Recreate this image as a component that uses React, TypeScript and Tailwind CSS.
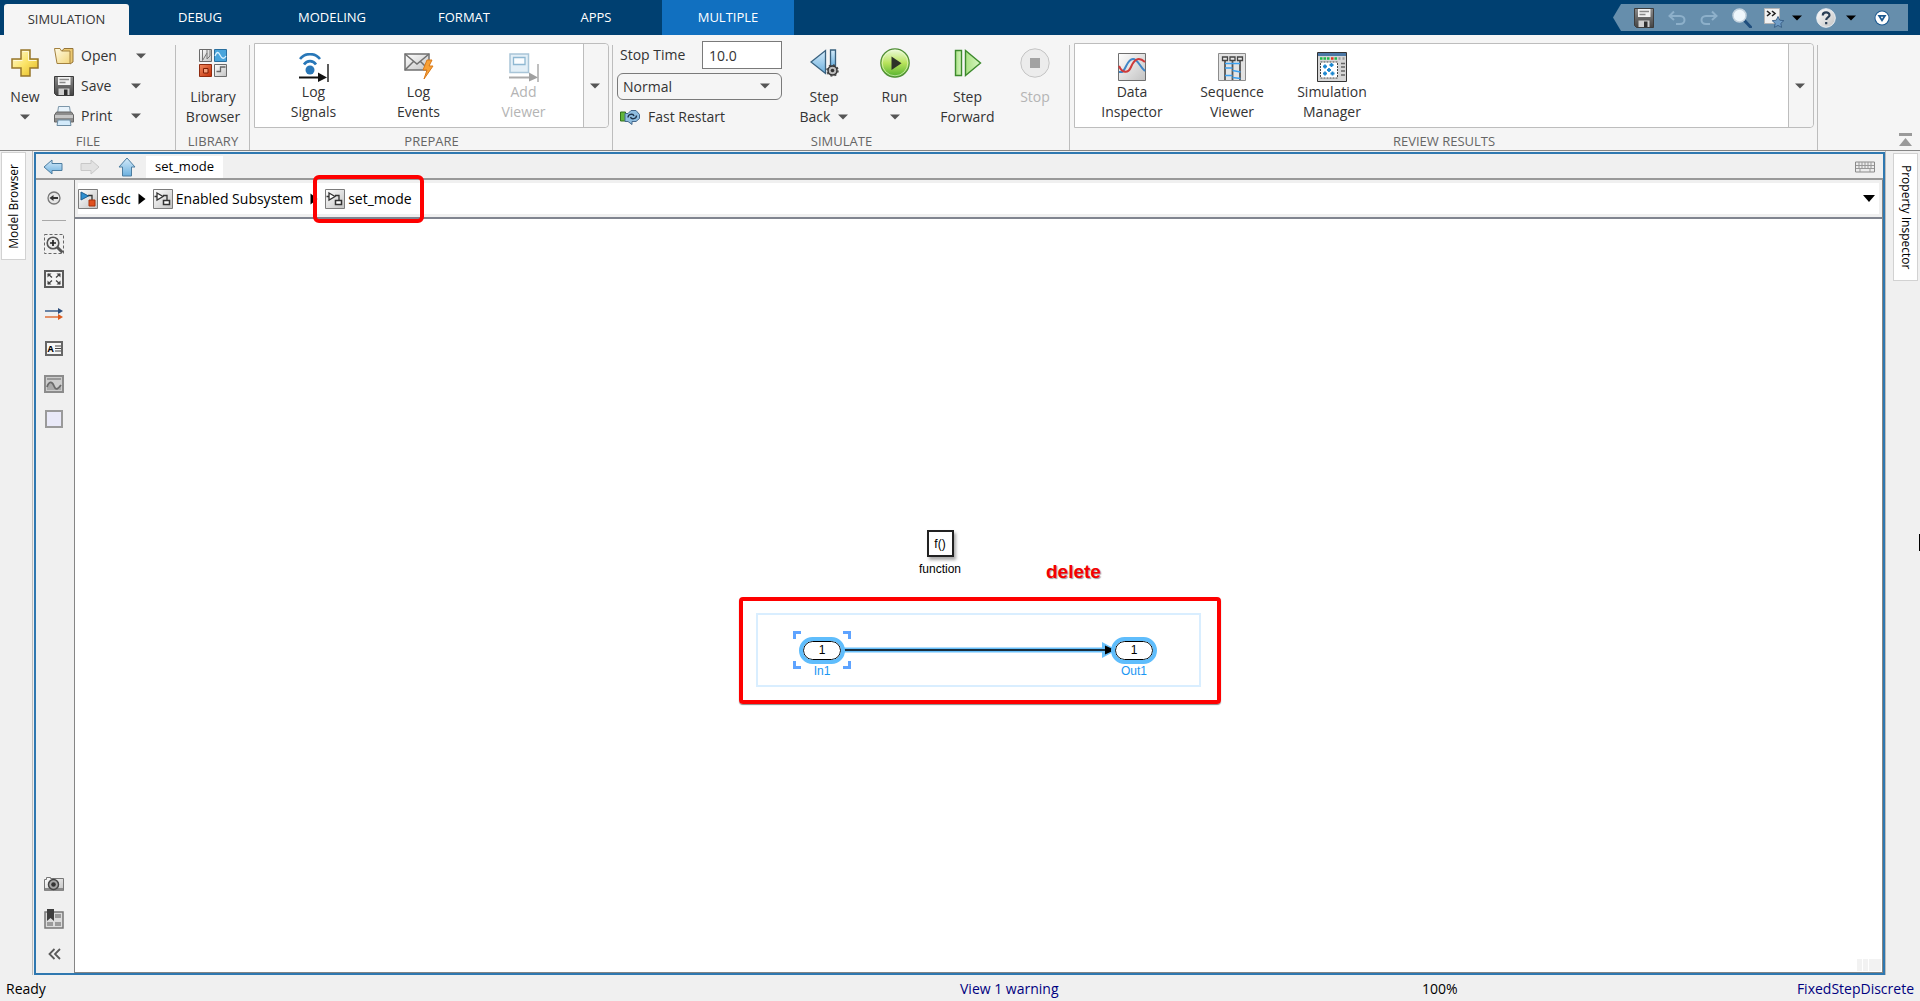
import { clsx } from "clsx";
import type { ReactNode } from "react";

const TABS = ["DEBUG", "MODELING", "FORMAT", "APPS", "MULTIPLE"];

function Caret({ className }: { className?: string }) {
  return (
    <svg viewBox="0 0 10 6" className={clsx("h-1.5 w-2.5 shrink-0", className)} aria-hidden="true">
      <path d="M0 0.5h10L5 5.5z" fill="currentColor" />
    </svg>
  );
}

function Gradients() {
  return (
    <svg className="absolute size-0" aria-hidden="true">
      <defs>
        <linearGradient id="gold" x1="0" y1="0" x2="1" y2="1">
          <stop offset="0" stopColor="#fffbe0" />
          <stop offset="0.5" stopColor="#fbe46a" />
          <stop offset="1" stopColor="#e3b71c" />
        </linearGradient>
        <linearGradient id="paper" x1="0" y1="0" x2="1" y2="1">
          <stop offset="0" stopColor="#fffbe6" />
          <stop offset="1" stopColor="#f3d67c" />
        </linearGradient>
        <linearGradient id="blue" x1="0" y1="0" x2="0" y2="1">
          <stop offset="0" stopColor="#d5ebfa" />
          <stop offset="1" stopColor="#6cb0de" />
        </linearGradient>
        <linearGradient id="grey" x1="0" y1="0" x2="1" y2="1">
          <stop offset="0" stopColor="#ffffff" />
          <stop offset="1" stopColor="#c2c2c2" />
        </linearGradient>
        <linearGradient id="dark" x1="0" y1="0" x2="0" y2="1">
          <stop offset="0" stopColor="#8a8a8a" />
          <stop offset="1" stopColor="#444444" />
        </linearGradient>
        <linearGradient id="green" x1="0" y1="0" x2="0" y2="1">
          <stop offset="0" stopColor="#eefbe0" />
          <stop offset="0.5" stopColor="#b9e35c" />
          <stop offset="1" stopColor="#4fb02c" />
        </linearGradient>
        <linearGradient id="mint" x1="0" y1="0" x2="1" y2="0">
          <stop offset="0" stopColor="#a9e184" />
          <stop offset="1" stopColor="#d8f6c2" />
        </linearGradient>
        <linearGradient id="red" x1="0" y1="0" x2="1" y2="1">
          <stop offset="0" stopColor="#f08a60" />
          <stop offset="1" stopColor="#c22d06" />
        </linearGradient>
      </defs>
    </svg>
  );
}

function PlusIcon() {
  return (
    <svg viewBox="0 0 28 28" className="size-7">
      <path d="M10 1h9v9h8v9h-8v8h-9v-8H1v-9h9z" fill="url(#gold)" stroke="#96762b" strokeWidth="1.5" />
      <path d="M11.5 2.5h6v9h8M2.5 11.5h9" fill="none" stroke="#fff9d8" />
    </svg>
  );
}

function FolderIcon() {
  return (
    <svg viewBox="0 0 20 18" className="h-[18px] w-5">
      <path d="M8 4l2-2.500h9V15l-3 2z" fill="#ecc972" stroke="#957438" />
      <path d="M0.5 1.500h5.500l1.500 2.500h8.500v12.500H3z" fill="url(#paper)" stroke="#a3813f" />
    </svg>
  );
}

function SaveIcon() {
  return (
    <svg viewBox="0 0 20 20" className="size-5">
      <path d="M0.5 0.5h19v19h-17l-2-2z" fill="url(#dark)" stroke="#3c3c3c" />
      <path d="M4 1h12.5v8H4z" fill="#f2f2f2" />
      <path d="M5.5 3.5h9.5M5.5 6.5h6" stroke="#8a8a8a" strokeWidth="1.5" />
      <path d="M4.5 12.5h11V19h-11z" fill="#cfcfcf" />
      <path d="M10 13.5h3.5V19H10z" fill="#2e2e2e" />
    </svg>
  );
}

function PrintIcon() {
  return (
    <svg viewBox="0 0 20 20" className="size-5">
      <path d="M4.5 0.5h11l1 7h-13z" fill="#e8f3fb" stroke="#7d97aa" />
      <path d="M2.5 6h15l2 3v7H0.5V9z" fill="#8d8d8d" stroke="#666" />
      <path d="M1 9h18v3H1z" fill="#c6c6c6" />
      <path d="M4 14h12l1 5.500H3z" fill="#d3eafa" stroke="#6d8ba1" />
    </svg>
  );
}

function LibraryIcon() {
  return (
    <svg viewBox="0 0 28 28" className="size-7">
      <path d="M0.5 0.5h12v12H0.5z" fill="url(#grey)" stroke="#6b6b6b" />
      <path d="M3.500 1v10.500L8 4v6l3-3V1M8 1v3" fill="none" stroke="#777" />
      <path d="M15.5 0.5h12v12h-12z" fill="#49a5dc" stroke="#2a6f9e" />
      <path d="M16 7c2-5 3.500-4 5-1s3.500 5 6 1" fill="none" stroke="#d8f1ff" strokeWidth="1.300" />
      <path d="M0.5 15.500h12v12H0.5z" fill="url(#red)" stroke="#8e2b10" />
      <path d="M4.500 19.500h4.500v4.500H4.500z" fill="#f6a27e" stroke="#7d1d04" />
      <path d="M15.5 15.500h12v12h-12z" fill="url(#grey)" stroke="#6b6b6b" />
      <path d="M17.500 22.500h4v-4.500h5" fill="none" stroke="#666" strokeWidth="1.300" />
    </svg>
  );
}

function LogSignalsIcon() {
  return (
    <svg viewBox="0 0 30 29" className="h-[29px] w-[30px]">
      <path d="M1 6C6-0.500 16-0.500 21 6M5 11.500c3-4.500 9-4.500 12 0" fill="none" stroke="#2877b8" strokeWidth="2.600" />
      <circle cx="11" cy="17" r="4.500" fill="#2877b8" />
      <path d="M0 24.500h21" stroke="#111" strokeWidth="2" />
      <path d="M19 19.500l9 5-9 4.500z" fill="#111" />
      <path d="M29 11v18" stroke="#333" strokeWidth="1.600" />
    </svg>
  );
}

function LogEventsIcon() {
  return (
    <svg viewBox="0 0 30 28" className="h-7 w-[30px]">
      <path d="M1 1h24v16H1z" fill="url(#grey)" stroke="#707070" strokeWidth="1.500" />
      <path d="M1 1l12 10L25 1M1 17l9-9M25 17l-9-9" fill="none" stroke="#707070" strokeWidth="1.500" />
      <path d="M23 7h5l-3 6h4l-9 13 3-9h-4z" fill="#f7a035" stroke="#d97a1b" />
    </svg>
  );
}

function AddViewerIcon() {
  return (
    <svg viewBox="0 0 30 29" className="h-[29px] w-[30px]">
      <path d="M1 1h18.500v18.500H1z" fill="#e3eff7" stroke="#a9c5d8" strokeWidth="1.500" />
      <path d="M4.500 4.500h11.500v7H4.500z" fill="#fafdff" stroke="#8fb8d2" strokeWidth="1.300" />
      <path d="M0 24.500h21" stroke="#aaa" strokeWidth="2" />
      <path d="M20 19.500l9 5-9 4z" fill="#a0a0a0" />
      <path d="M29 11v18" stroke="#aaa" strokeWidth="1.500" />
    </svg>
  );
}

function FastRestartIcon() {
  return (
    <svg viewBox="0 0 20 16" className="h-4 w-5">
      <path d="M0.500 3h5v9h-5z" fill="#62b63b" stroke="#33711a" />
      <path d="M5 4.500h3l3-3h5l3.500 4v4l-3.500 3h-4v3l-4-3H5z" fill="#8fbde0" stroke="#45688c" />
      <path d="M8 8.500c0-3.500 5-4.500 6-1.500M16.500 6.500c0 3.500-5 4.500-6 1.500" fill="none" stroke="#20354c" strokeWidth="1.400" />
    </svg>
  );
}

function StepBackIcon() {
  return (
    <svg viewBox="0 0 29 28" className="h-7 w-[29px]">
      <path d="M15.500 1.500v23L1 13z" fill="url(#blue)" stroke="#39617f" strokeWidth="1.300" />
      <path d="M20.500 1h5v16h-5z" fill="url(#blue)" stroke="#39617f" strokeWidth="1.300" />
      <circle cx="22.500" cy="21.500" r="4.500" fill="#bcbcbc" stroke="#333" strokeWidth="1.500" />
      <circle cx="22.500" cy="21.500" r="5.500" fill="none" stroke="#444" strokeWidth="1.500" strokeDasharray="2 2.300" />
      <circle cx="22.500" cy="21.500" r="1.800" fill="#333" />
    </svg>
  );
}

function RunIcon() {
  return (
    <svg viewBox="0 0 30 30" className="size-[30px]">
      <circle cx="15" cy="15" r="14.200" fill="url(#green)" stroke="#4f8d36" strokeWidth="1.200" />
      <circle cx="15" cy="15" r="12.800" fill="none" stroke="#f0fbd8" strokeOpacity="0.600" />
      <path d="M11.500 8.500v13.500l10-6.700z" fill="#2e3328" />
    </svg>
  );
}

function StepForwardIcon() {
  return (
    <svg viewBox="0 0 28 28" className="size-7">
      <path d="M1.500 1.500h6v25h-6z" fill="url(#mint)" stroke="#3d8a2d" strokeWidth="1.400" />
      <path d="M11.500 1.500v25l15-12.500z" fill="url(#mint)" stroke="#3d8a2d" strokeWidth="1.400" />
    </svg>
  );
}

function StopIcon() {
  return (
    <svg viewBox="0 0 30 30" className="size-[30px]">
      <circle cx="15" cy="15" r="14.200" fill="#ececec" stroke="#c4c4c4" />
      <path d="M10 10h10v10H10z" fill="#a2a2a2" />
    </svg>
  );
}

function DataInspectorIcon() {
  return (
    <svg viewBox="0 0 28 28" className="size-7">
      <path d="M0.500 0.500h27v27H0.500z" fill="url(#grey)" stroke="#6f6f6f" />
      <path d="M1 19h3C8 17 9 6 15 6c5 0 6 7 12 12" fill="none" stroke="#3f86c7" strokeWidth="2" />
      <path d="M1 13c3 7 9 8 12 1S20 3 27 9" fill="none" stroke="#cf3a3a" strokeWidth="2" />
    </svg>
  );
}

function SequenceIcon() {
  return (
    <svg viewBox="0 0 28 28" className="size-7">
      <path d="M0.500 0.500h27v27H0.500z" fill="#e3e3e3" stroke="#8c8c8c" />
      <path d="M7 8v19M14.500 8v19M22 8v19" stroke="#555" strokeWidth="1.800" />
      <path d="M4.500 4h5v3.500h-5zM12 4h5v3.500h-5zM19.500 4h5v3.500h-5z" fill="#e8e8e8" stroke="#444" strokeWidth="1.300" />
      <path d="M7 10.500h15M7 15h7.500M14.500 17.500l8 1.500M7 22.500h7.500M14.500 24.500l8 1" stroke="#3aa0f0" strokeWidth="1.600" />
    </svg>
  );
}

function ManagerIcon() {
  return (
    <svg viewBox="0 0 30 30" className="size-[30px]">
      <path d="M0.500 0.500h29v29H0.500z" fill="#d6d6d6" stroke="#333" />
      <path d="M1 1h28v3H1z" fill="#4b77a5" />
      <path d="M3 6.500h2.500M6.500 6.500H9M10 6.500h2.500M17.500 6.500H20" stroke="#21b84a" strokeWidth="2.500" />
      <path d="M14 6.500h2.500" stroke="#e0321f" strokeWidth="2.500" />
      <path d="M21.500 6.500h2M25.500 6.500h2" stroke="#999" strokeWidth="2.500" />
      <path d="M3.500 10h17v16h-17z" fill="#fff" stroke="#444" strokeDasharray="2 1" />
      <path d="M24 11.500h4M24 15h4M24 19h4M24 23h4" stroke="#666" strokeWidth="1.300" />
      <path
        d="M6 14.500h4M8 12.500v4M12.500 13h4M14.500 11v4M10 18h4M12 16v4M6 21.500h4M8 19.500v4M13.500 21.500h4M15.500 19.500v4"
        stroke="#1e88cf"
        strokeWidth="1.800"
      />
    </svg>
  );
}

function ModelIcon({ root }: { root?: boolean }) {
  return (
    <svg viewBox="0 0 20 20" className="size-5 shrink-0">
      <path d="M0.500 0.500h19v19H0.500z" fill="url(#grey)" stroke="#7c7c7c" />
      <path d="M10 6.500h4v6" fill="none" stroke="#333" strokeWidth="1.300" />
      {root ? (
        <>
          <path d="M3 3l7.500 4L3 11z" fill="#2e8fd0" stroke="#1f5f90" />
          <path d="M11 11h6v6h-6z" fill="#e0501f" stroke="#a5330c" />
        </>
      ) : (
        <>
          <path d="M4 4l6 3.500L4 11zM1.500 7.500H4" fill="#fff" stroke="#333" strokeWidth="1.300" />
          <path d="M10.500 11.500h6v4h-6z" fill="#fff" stroke="#333" strokeWidth="1.500" />
        </>
      )}
    </svg>
  );
}

function CrumbArrow() {
  return (
    <svg viewBox="0 0 8 12" className="mx-[7px] h-3 w-2 shrink-0">
      <path d="M0.500 0.500L7.500 6l-7 5.500z" fill="#000" />
    </svg>
  );
}

function BigButton({
  icon,
  lines,
  className,
  disabled,
  caret
}: {
  icon: ReactNode;
  lines: string[];
  className?: string;
  disabled?: boolean;
  caret?: boolean;
}) {
  const last = lines.length - 1;

  return (
    <button
      type="button"
      disabled={disabled}
      className={clsx("flex shrink-0 flex-col items-center leading-5", disabled ? "text-[#b4b4b4]" : "text-[#333]", className)}
    >
      <span className="flex h-[30px] items-center">{icon}</span>
      {lines.map((line, index) => (
        <span key={line} className={clsx("flex items-center gap-2", index === 0 && "pt-[9px]")}>
          {line}
          {caret && last > 0 && index === last ? <Caret className="text-[#555]" /> : null}
        </span>
      ))}
      {caret && last === 0 ? (
        <span className="flex h-5 items-center">
          <Caret className="text-[#555]" />
        </span>
      ) : null}
    </button>
  );
}

function GalleryItem({ icon, lines, className, disabled }: { icon: ReactNode; lines: string[]; className: string; disabled?: boolean }) {
  return (
    <button
      type="button"
      disabled={disabled}
      className={clsx("flex shrink-0 flex-col items-center pt-2 leading-5", disabled ? "text-[#b4b4b4]" : "text-[#333]", className)}
    >
      <span className="flex h-[30px] items-center">{icon}</span>
      {lines.map((line) => (
        <span key={line}>{line}</span>
      ))}
    </button>
  );
}

function Gallery({ label, children }: { label: string; children: ReactNode }) {
  return (
    <div className="mx-1 mt-2 flex h-[85px] rounded-r border border-[#bdbdbd] bg-white">
      <div className="flex min-w-0 flex-1 overflow-hidden">{children}</div>
      <button
        type="button"
        aria-label={label}
        className="flex w-[25px] shrink-0 items-center justify-center rounded-r border-l border-[#bdbdbd] bg-[#f5f5f5] pr-0.5 text-[#555]"
      >
        <Caret />
      </button>
    </div>
  );
}

function Section({ title, className, children }: { title: string; className: string; children: ReactNode }) {
  return (
    <section className={clsx("relative flex flex-col", className)}>
      <div className="h-[98px]">{children}</div>
      <h2 className="text-center text-[13px] leading-[17px] text-[#666]">{title}</h2>
      <span className="absolute right-0 top-2.5 bottom-0 w-px bg-[#bdbdbd]" />
    </section>
  );
}

function FileButton({ icon, label, wide }: { icon: ReactNode; label: string; wide?: boolean }) {
  return (
    <button type="button" className="flex h-[30px] items-center text-[#333]">
      <span className="flex w-[27px] items-center">{icon}</span>
      <span className={wide ? "w-[55px] text-left" : "w-[50px] text-left"}>{label}</span>
      <Caret className="text-[#555]" />
    </button>
  );
}

function QuickAccess() {
  return (
    <div className="mr-3 flex h-[27px] w-[295px] shrink-0 items-center bg-[#668eac] pl-[21px] [clip-path:polygon(8px_0,100%_0,100%_100%,8px_100%,0_50%)]">
      <button type="button" aria-label="Save">
        <SaveIcon />
      </button>
      <button type="button" aria-label="Undo" className="ml-3.5">
        <svg viewBox="0 0 18 16" className="h-4 w-[18px]">
          <path d="M2 6h10c6 0 6 8 0 8H8M6 1.500L1.500 6 6 10" fill="none" stroke="#8db0ca" strokeWidth="2" />
        </svg>
      </button>
      <button type="button" aria-label="Redo" className="ml-3.5">
        <svg viewBox="0 0 18 16" className="h-4 w-[18px]">
          <path d="M16 6H6c-6 0-6 8 0 8h4M12 1.500L16.500 6 12 10" fill="none" stroke="#8db0ca" strokeWidth="2" />
        </svg>
      </button>
      <button type="button" aria-label="Search" className="ml-3.5">
        <svg viewBox="0 0 20 20" className="size-5">
          <path d="M12 12l6.500 7" stroke="#1f4e7d" strokeWidth="3" strokeLinecap="round" />
          <circle cx="7.500" cy="7.500" r="6.500" fill="#eef6fb" stroke="#c4d3de" strokeWidth="1.500" />
        </svg>
      </button>
      <button type="button" aria-label="Favorites" className="ml-3 flex items-center gap-2 text-black">
        <svg viewBox="0 0 20 20" className="size-5">
          <path d="M0.500 0.500h15v15h-15z" fill="#f2f2f2" stroke="#b5b5b5" />
          <path d="M3 3l3 2.500L3 8M8 3l3 2.500L8 8" fill="none" stroke="#222" strokeWidth="1.600" />
          <path d="M14 8.500l1.800 3.700 4 .5-3 2.700.8 4-3.600-2-3.600 2 .8-4-3-2.700 4-.5z" fill="#6f9cc6" stroke="#31577e" strokeWidth="0.800" />
        </svg>
        <Caret />
      </button>
      <button type="button" aria-label="Help" className="ml-3.5 flex items-center gap-2.5 text-black">
        <svg viewBox="0 0 20 20" className="size-5">
          <circle cx="10" cy="10" r="9.300" fill="url(#grey)" stroke="#e8eef3" />
          <path d="M6.800 7.500c0-4 6.700-4 6.700-.3 0 2.300-3.300 2.200-3.300 4.800M10.200 14v2.200" fill="none" stroke="#2b3f55" strokeWidth="2.200" />
        </svg>
        <Caret />
      </button>
      <button type="button" aria-label="Customize" className="ml-[18px]">
        <svg viewBox="0 0 16 16" className="size-4">
          <circle cx="8" cy="8" r="7.500" fill="#1d5a90" />
          <circle cx="8" cy="8" r="6.500" fill="#fff" />
          <path d="M3.500 5h9L8 12z" fill="#1d5a90" />
          <path d="M6.700 6.800h2.600L8 8.800z" fill="#fff" />
        </svg>
      </button>
    </div>
  );
}

function Toolstrip() {
  return (
    <div className="relative flex border-b border-[#868686] bg-[#f5f5f5] text-sm">
      <Section title="FILE" className="w-44 shrink-0">
        <div className="flex">
          <BigButton icon={<PlusIcon />} lines={["New"]} caret className="ml-1 mt-[13px] w-[42px]" />
          <div className="ml-2 mt-1.5 flex flex-col">
            <FileButton icon={<FolderIcon />} label="Open" wide />
            <FileButton icon={<SaveIcon />} label="Save" />
            <FileButton icon={<PrintIcon />} label="Print" />
          </div>
        </div>
      </Section>
      <Section title="LIBRARY" className="w-[74px] shrink-0">
        <BigButton icon={<LibraryIcon />} lines={["Library", "Browser"]} className="mt-[13px] w-full" />
      </Section>
      <Section title="PREPARE" className="w-[363px] shrink-0">
        <Gallery label="More prepare tools">
          <GalleryItem icon={<LogSignalsIcon />} lines={["Log", "Signals"]} className="ml-1.5 w-[105px]" />
          <GalleryItem icon={<LogEventsIcon />} lines={["Log", "Events"]} className="w-[105px]" />
          <GalleryItem icon={<AddViewerIcon />} lines={["Add", "Viewer"]} className="w-[105px]" disabled />
        </Gallery>
      </Section>
      <Section title="SIMULATE" className="w-[457px] shrink-0">
        <div className="flex">
          <div className="ml-1 mt-1.5 w-[165px] text-[#333]">
            <label className="flex h-7 items-center justify-between pl-[3px]">
              Stop Time
              <input defaultValue="10.0" className="h-7 w-20 border border-[#7a7a7a] bg-white px-1.5 outline-none" />
            </label>
            <div className="relative mt-1">
              <select aria-label="Simulation mode" className="h-[27px] w-full appearance-none rounded-md border border-[#7a7a7a] bg-[#f5f5f5] px-[5px] outline-none">
                <option>Normal</option>
                <option>Accelerator</option>
              </select>
              <Caret className="pointer-events-none absolute right-3 top-2.5 text-[#555]" />
            </div>
            <button type="button" className="mt-[7px] flex items-center gap-2 pl-[3px]">
              <FastRestartIcon />
              Fast Restart
            </button>
          </div>
          <BigButton icon={<StepBackIcon />} lines={["Step", "Back"]} caret className="ml-[5px] mt-[13px] w-[74px]" />
          <BigButton icon={<RunIcon />} lines={["Run"]} caret className="mt-[13px] w-[67px]" />
          <BigButton icon={<StepForwardIcon />} lines={["Step", "Forward"]} className="mt-[13px] w-[79px]" />
          <BigButton icon={<StopIcon />} lines={["Stop"]} className="mt-[13px] w-14" disabled />
        </div>
      </Section>
      <Section title="REVIEW RESULTS" className="min-w-0 flex-1">
        <Gallery label="More review tools">
          <GalleryItem icon={<DataInspectorIcon />} lines={["Data", "Inspector"]} className="ml-[7px] w-[100px]" />
          <GalleryItem icon={<SequenceIcon />} lines={["Sequence", "Viewer"]} className="w-[100px]" />
          <GalleryItem icon={<ManagerIcon />} lines={["Simulation", "Manager"]} className="w-[100px]" />
        </Gallery>
      </Section>
      <div className="flex w-[102px] shrink-0 items-end justify-end pb-1 pr-2">
        <button type="button" aria-label="Minimize toolstrip">
          <svg viewBox="0 0 13 13" className="size-[13px]">
            <path d="M0 0h13v3H0zM0 13l6.500-8 6.500 8z" fill="#9a9a9a" />
          </svg>
        </button>
      </div>
    </div>
  );
}

function SideTab({ label, flip }: { label: string; flip?: boolean }) {
  return (
    <button
      type="button"
      className={clsx(
        "flex w-[25px] items-center justify-center border border-[#d2d2d2] bg-white text-xs leading-none text-black",
        flip ? "h-[108px]" : "h-32"
      )}
    >
      <span className={clsx("[writing-mode:vertical-rl]", flip && "rotate-180")}>{label}</span>
    </button>
  );
}

function PaletteButton({ label, children }: { label: string; children: ReactNode }) {
  return (
    <button type="button" aria-label={label} className="flex h-[35px] w-full items-center justify-center">
      {children}
    </button>
  );
}

function Palette() {
  return (
    <div className="flex w-[38px] shrink-0 flex-col items-center bg-[#f0f0f0] pb-0.5 pr-0.5">
      <PaletteButton label="Hide browser">
        <svg viewBox="0 0 14 14" className="size-3.5">
          <circle cx="7" cy="7" r="6" fill="#e6e6e6" stroke="#777" strokeWidth="1.300" />
          <path d="M2.500 7l4-3v2h4.500v2H6.500v2z" fill="#333" />
        </svg>
      </PaletteButton>
      <span className="mb-[5px] mt-[5px] h-px w-6 bg-[#a8a8a8]" />
      <PaletteButton label="Zoom">
        <svg viewBox="0 0 20 20" className="size-5">
          <path d="M0.500 0.500h19v19H0.500z" fill="none" stroke="#666" strokeDasharray="3 2" />
          <path d="M13 13l5.500 5.500" stroke="#555" strokeWidth="3" />
          <circle cx="9" cy="9" r="5.800" fill="#eaeaea" stroke="#555" strokeWidth="1.600" />
          <path d="M6 9h6M9 6v6" stroke="#222" strokeWidth="1.700" />
        </svg>
      </PaletteButton>
      <PaletteButton label="Fit to view">
        <svg viewBox="0 0 20 18" className="h-[18px] w-5">
          <path d="M1 1h18v16H1z" fill="#f4f4f4" stroke="#5c5c5c" strokeWidth="2" />
          <path d="M3.500 3.500h4l-4 4zM16.500 3.500v4l-4-4zM16.500 14.500h-4l4-4zM3.500 14.500v-4l4 4z" fill="#444" />
          <path d="M4 4l4 3.500M16 4l-4 3.500M16 14l-4-3.500M4 14l4-3.500" stroke="#444" strokeWidth="1.300" />
        </svg>
      </PaletteButton>
      <PaletteButton label="Sample time">
        <svg viewBox="0 0 18 14" className="h-3.5 w-[18px]">
          <path d="M0 4h14" stroke="#3c5f8c" strokeWidth="1.500" />
          <path d="M13 1l5 3-5 3z" fill="#2c4d7c" />
          <path d="M0 10h14" stroke="#e0703a" strokeWidth="1.500" />
          <path d="M13 7l5 3-5 3z" fill="#dd5a1c" />
        </svg>
      </PaletteButton>
      <PaletteButton label="Annotation">
        <span className="flex h-[15px] w-[18px] items-center justify-center gap-px border-2 border-[#666] bg-[#f6f6f6] text-[9px] font-bold leading-none text-black">
          A
          <svg viewBox="0 0 6 7" className="h-[7px] w-1.5">
            <path d="M0 1h6M0 3.500h6M0 6h6" stroke="#444" />
          </svg>
        </span>
      </PaletteButton>
      <PaletteButton label="Image">
        <svg viewBox="0 0 20 18" className="h-[18px] w-5">
          <path d="M1 1h18v16H1z" fill="#cdcdcd" stroke="#8c8c8c" strokeWidth="2" />
          <path d="M3 4h14" stroke="#999" strokeWidth="2" />
          <path d="M3 12c2-6 5-6 7-1s4 3 7-1v5H3z" fill="#a9a9a9" />
          <path d="M3 12c2-6 5-6 7-1s4 3 7-1" fill="none" stroke="#6a6a6a" strokeWidth="1.800" />
        </svg>
      </PaletteButton>
      <PaletteButton label="Area">
        <span className="size-[18px] border-2 border-[#9a9a9a] bg-[#e9e9f8]" />
      </PaletteButton>
      <div className="mt-auto w-full">
        <PaletteButton label="Snapshot">
          <svg viewBox="0 0 20 16" className="h-4 w-5">
            <path d="M0.500 3.500h2v-2h4v1h13v12H0.500z" fill="url(#grey)" stroke="#777" />
            <path d="M1 12h18v3H1z" fill="#888" />
            <circle cx="9.500" cy="8.500" r="5" fill="#a6a6a6" stroke="#444" strokeWidth="1.500" />
            <circle cx="9.500" cy="8.500" r="2.300" fill="#333" />
          </svg>
        </PaletteButton>
        <PaletteButton label="Viewmarks">
          <svg viewBox="0 0 20 20" className="size-5">
            <path d="M1 3h18v16H1z" fill="#dcdcdc" stroke="#777" strokeWidth="1.500" />
            <path d="M11 5h6v4h-6zM3 13h6v4H3zM11 13h6v4h-6z" fill="#9b9b9b" />
            <path d="M3 0h7v12l-3.500-3L3 12z" fill="#3f3f3f" />
          </svg>
        </PaletteButton>
        <PaletteButton label="Collapse palette">
          <svg viewBox="0 0 13 12" className="h-3 w-[13px]">
            <path d="M6.500 1L1.500 6l5 5M12 1L7 6l5 5" fill="none" stroke="#5a5a5a" strokeWidth="1.800" />
          </svg>
        </PaletteButton>
      </div>
    </div>
  );
}

function NavRow() {
  return (
    <div className="flex h-[26px] items-center border-b-2 border-[#999] bg-[#f0f0f0] pt-0.5">
      <button type="button" aria-label="Back" className="ml-[7px]">
        <svg viewBox="0 0 20 16" className="h-4 w-5">
          <path d="M1 8l8-7v3.500h10v7H9V15z" fill="url(#blue)" stroke="#4c7da0" />
        </svg>
      </button>
      <button type="button" aria-label="Forward" className="ml-[17px]" disabled>
        <svg viewBox="0 0 20 16" className="h-4 w-5">
          <path d="M19 8l-8-7v3.500H1v7h10V15z" fill="#e2e2e2" stroke="#c8c8c8" />
        </svg>
      </button>
      <button type="button" aria-label="Up to parent" className="ml-[18px]">
        <svg viewBox="0 0 18 20" className="h-5 w-[18px]">
          <path d="M9 1l8 9h-3.500v9h-9v-9H1z" fill="url(#blue)" stroke="#4c7da0" />
        </svg>
      </button>
      <button type="button" className="ml-2.5 flex h-full w-[77px] items-center justify-center bg-white text-[13px] text-black">
        set_mode
      </button>
      <button type="button" aria-label="Keyboard shortcuts" className="ml-auto mr-2">
        <svg viewBox="0 0 20 12" className="h-3 w-5">
          <path d="M0.500 1h19v10h-19z" fill="#ececec" stroke="#8a8a8a" />
          <path d="M1 4.500h18M1 7.500h18M4 1v6.500M7 1v6.500M10 1v6.500M13 1v6.500M16 1v6.500M5 8v3M15 8v3" stroke="#999" />
        </svg>
      </button>
    </div>
  );
}

function Breadcrumb() {
  return (
    <nav className="flex h-[39px] items-center border-b-2 border-[#80848f] bg-white pl-[3px] text-sm text-black shadow-[inset_0_0_0_3px_#f0f0f0]">
      <a href="#esdc" className="flex items-center gap-[3px]">
        <ModelIcon root />
        esdc
      </a>
      <CrumbArrow />
      <a href="#enabled" className="flex items-center gap-[3px]">
        <ModelIcon />
        Enabled Subsystem
      </a>
      <CrumbArrow />
      <a href="#set_mode" className="relative z-10 flex items-center gap-[3px]">
        <span className="absolute -inset-x-3 -inset-y-3.5 rounded-md border-4 border-[#fe0000]" />
        <ModelIcon />
        set_mode
      </a>
      <button type="button" aria-label="Breadcrumb history" className="ml-auto mr-[7px] text-black">
        <svg viewBox="0 0 12 7" className="h-[7px] w-3">
          <path d="M0 0h12L6 7z" fill="currentColor" />
        </svg>
      </button>
    </nav>
  );
}

function PortBlock({ className, name, selected }: { className: string; name: string; selected?: boolean }) {
  return (
    <div className={clsx("absolute w-[58px] text-center text-xs leading-4", className)}>
      <div className="relative flex h-[38px] items-center justify-center">
        {selected ? (
          <>
            <span className="absolute left-0 top-0 size-2 border-l-[3px] border-t-[3px] border-[#5ea3ff]" />
            <span className="absolute right-0 top-0 size-2 border-r-[3px] border-t-[3px] border-[#5ea3ff]" />
            <span className="absolute bottom-0 left-0 size-2 border-b-[3px] border-l-[3px] border-[#5ea3ff]" />
            <span className="absolute bottom-0 right-0 size-2 border-b-[3px] border-r-[3px] border-[#5ea3ff]" />
          </>
        ) : null}
        <span className="flex h-[19px] w-[38px] items-center justify-center rounded-full border border-black bg-white text-black outline-4 outline-[#5fbdfc]">
          1
        </span>
      </div>
      <div className="-mt-1.5 text-[#1b96f3]">{name}</div>
    </div>
  );
}

function Canvas() {
  return (
    <main className="relative min-h-0 flex-1 overflow-hidden border-b border-[#858585] bg-white font-['Liberation_Sans',sans-serif]">
      <div className="absolute left-[835px] top-[311px] flex w-[60px] flex-col items-center text-xs leading-4 text-black">
        <span className="flex size-[27px] items-center justify-center border-2 border-[#222] bg-white shadow-[2px_3px_3px_#aaa]">f()</span>
        <span className="mt-1">function</span>
      </div>
      <span className="absolute left-[971px] top-[341px] text-[19px] font-bold leading-6 text-[#f40000] [text-shadow:1px_1px_1px_#999]">delete</span>
      <div className="absolute left-[664px] top-[378px] h-[107px] w-[482px] rounded border-4 border-[#fe0000] shadow-[0_1px_1px_#888]" />
      <div className="absolute left-[681px] top-[394px] h-[74px] w-[445px] border-2 border-[#d9eeff]" />
      <svg viewBox="0 0 276 20" className="absolute left-[766px] top-[421px] h-5 w-[276px]">
        <path d="M0 10h264" stroke="#68c0fb" strokeWidth="5" />
        <path d="M261 2l15 8-15 8z" fill="#68c0fb" />
        <path d="M0 10h265" stroke="#000" strokeWidth="1.300" />
        <path d="M264 5.500l10 4.500-10 4.500z" fill="#000" />
      </svg>
      <PortBlock name="In1" className="left-[718px] top-[412px]" selected />
      <PortBlock name="Out1" className="left-[1030px] top-[412px]" />
      <div className="absolute bottom-px right-px flex h-3 gap-px">
        <span className="w-[5px] bg-[#f2f2f2]" />
        <span className="w-[5px] bg-[#f2f2f2]" />
        <span className="w-3 bg-[#f2f2f2]" />
      </div>
    </main>
  );
}

export default function App() {
  return (
    <div className="flex h-screen flex-col overflow-hidden bg-[#f0f0f0] font-['Open_Sans','Noto_Sans',sans-serif]">
      <Gradients />
      <header className="flex h-[35px] shrink-0 items-center justify-between bg-[#004071] text-[13px] text-white">
        <div className="flex h-full items-end pl-1">
          <button type="button" className="mr-[5px] h-[31px] w-[125px] rounded-t-[3px] bg-[#f5f5f5] text-[#333]">
            SIMULATION
          </button>
          {TABS.map((tab) => (
            <button key={tab} type="button" className={clsx("h-full w-[132px]", tab === "MULTIPLE" && "bg-[#1170c0]")}>
              {tab}
            </button>
          ))}
        </div>
        <QuickAccess />
      </header>
      <Toolstrip />
      <div className="flex min-h-0 flex-1">
        <aside className="w-[33px] shrink-0 border-r border-[#bdbdbd] pl-px pt-px">
          <SideTab label="Model Browser" flip />
        </aside>
        <div className="ml-px mt-px flex min-w-0 flex-1 flex-col border-2 border-[#2f78b0]">
          <NavRow />
          <div className="flex min-h-0 flex-1">
            <Palette />
            <div className="flex min-w-0 flex-1 flex-col border-x border-[#858585]">
              <Breadcrumb />
              <Canvas />
            </div>
          </div>
        </div>
        <aside className="relative w-[35px] shrink-0 border-l border-[#bdbdbd] pl-[7px] pt-0.5">
          <SideTab label="Property Inspector" />
          {/* splitter grip of the collapsed inspector */}
          <span className="absolute right-0 top-[383px] h-[17px] w-px bg-black" />
        </aside>
      </div>
      <footer className="grid h-[26px] shrink-0 grid-cols-[50%_1fr_492px] items-center px-1.5 pt-0.5 text-sm text-black">
        <span>Ready</span>
        <a href="#warnings" className="text-[#00007f]">
          View 1 warning
        </a>
        <span className="flex justify-between">
          100%
          <a href="#solver" className="text-[#00007f]">
            FixedStepDiscrete
          </a>
        </span>
      </footer>
    </div>
  );
}
